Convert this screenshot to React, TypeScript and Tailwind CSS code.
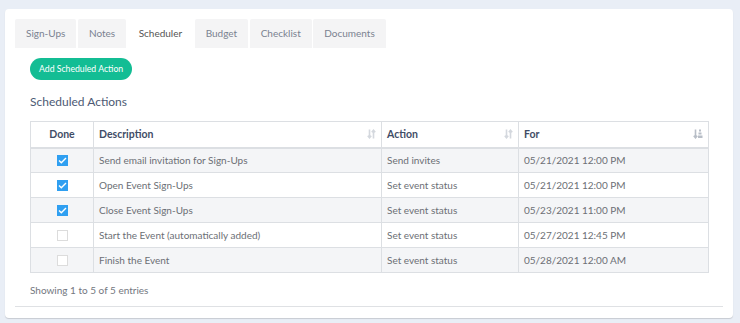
import React from "react";

const rows = [
  { done: true, desc: "Send email invitation for Sign-Ups", action: "Send invites", when: "05/21/2021 12:00 PM" },
  { done: true, desc: "Open Event Sign-Ups", action: "Set event status", when: "05/21/2021 12:00 PM" },
  { done: true, desc: "Close Event Sign-Ups", action: "Set event status", when: "05/23/2021 11:00 PM" },
  { done: false, desc: "Start the Event (automatically added)", action: "Set event status", when: "05/27/2021 12:45 PM" },
  { done: false, desc: "Finish the Event", action: "Set event status", when: "05/28/2021 12:00 AM" },
];

function SortIcon() {
  return (
    <svg width="9" height="10" viewBox="0 0 9 10" className="text-[#d4d8de]">
      <path d="M2.5 0.5v8M0.8 6.8l1.7 2 1.7-2" stroke="currentColor" strokeWidth="1.6" fill="none" />
      <path d="M6.5 9.5v-8M4.8 3.2l1.7-2 1.7 2" stroke="currentColor" strokeWidth="1.6" fill="none" />
    </svg>
  );
}

function SortDownIcon() {
  return (
    <svg width="10" height="10" viewBox="0 0 10 10" className="text-[#b8bec7]">
      <path d="M2.5 0.5v8M0.8 6.8l1.7 2 1.7-2" stroke="currentColor" strokeWidth="1.6" fill="none" />
      <rect x="6" y="0.5" width="2" height="2" fill="currentColor" />
      <rect x="5.5" y="3.5" width="3" height="2" fill="currentColor" />
      <rect x="5" y="6.5" width="4.5" height="2.5" fill="currentColor" />
    </svg>
  );
}

function Check({ on }: { on: boolean }) {
  if (on)
    return (
      <div className="w-[11px] h-[11px] bg-[#2f9ff1] flex items-center justify-center">
        <svg width="9" height="7" viewBox="0 0 9 7">
          <path d="M1 3.5l2.3 2.2L8 1" stroke="white" strokeWidth="1.4" fill="none" />
        </svg>
      </div>
    );
  return <div className="w-[11px] h-[11px] border border-[#dcdcdc] bg-white" />;
}

export default function App() {
  const tabs = ["Sign-Ups", "Notes", "Scheduler", "Budget", "Checklist", "Documents"];
  return (
    <div
      className="w-[740px] h-[323px] bg-[#e9eef6] pt-[9px] pl-[5px] pr-[7px]"
      style={{ fontFamily: "Lato, 'Open Sans', sans-serif" }}
    >
      <div className="bg-white rounded-[4px] h-[309px] px-[10px] pt-[10px] shadow-[0_1px_1px_rgba(0,0,0,0.15)]">
        <div className="flex gap-[1.5px] h-[29px]">
          {tabs.map((t) => (
            <div
              key={t}
              className={
                "h-full px-[11px] flex items-center text-[10px] rounded-t-[2px] " +
                (t === "Scheduler" ? "bg-white text-[#555]" : "bg-[#f4f4f5] text-[#7a8290]")
              }
            >
              {t}
            </div>
          ))}
        </div>
        <div className="border-b border-[#dfe1e4] h-[259px] px-[15px] pt-[10px] flex flex-col items-start">
          <button className="h-[22px] px-[9px] rounded-full bg-[#13bd94] text-white text-[8.7px] leading-none">
            Add Scheduled Action
          </button>
          <div className="mt-[16px] text-[12px] text-[#4d5a74] leading-none">Scheduled Actions</div>
          <table className="mt-[13px] w-[679px] border-collapse text-[10px] leading-none">
            <thead>
              <tr className="h-[26px] text-[#3f4d66] font-bold text-[10.5px]">
                <th className="w-[63px] border border-[#dcdfe3] border-b-2 text-center font-bold">Done</th>
                <th className="w-[288px] border border-[#dcdfe3] border-b-2 text-left px-[5px] font-bold">
                  <div className="flex items-center justify-between">
                    <span>Description</span>
                    <SortIcon />
                  </div>
                </th>
                <th className="w-[137px] border border-[#dcdfe3] border-b-2 text-left px-[5px] font-bold">
                  <div className="flex items-center justify-between">
                    <span>Action</span>
                    <SortIcon />
                  </div>
                </th>
                <th className="border border-[#dcdfe3] border-b-2 text-left px-[5px] font-bold">
                  <div className="flex items-center justify-between">
                    <span>For</span>
                    <SortDownIcon />
                  </div>
                </th>
              </tr>
            </thead>
            <tbody className="text-[#6c6f75]">
              {rows.map((r, i) => (
                <tr key={i} className={"h-[25px] " + (i % 2 === 0 ? "bg-[#f4f5f7]" : "bg-white")}>
                  <td className="border border-[#dcdfe3]">
                    <div className="flex justify-center">
                      <Check on={r.done} />
                    </div>
                  </td>
                  <td className="border border-[#dcdfe3] px-[5px]">{r.desc}</td>
                  <td className="border border-[#dcdfe3] px-[5px]">{r.action}</td>
                  <td className="border border-[#dcdfe3] px-[5px]">{r.when}</td>
                </tr>
              ))}
            </tbody>
          </table>
          <div className="mt-[12px] text-[10px] leading-none text-[#737780]">Showing 1 to 5 of 5 entries</div>
        </div>
      </div>
    </div>
  );
}
